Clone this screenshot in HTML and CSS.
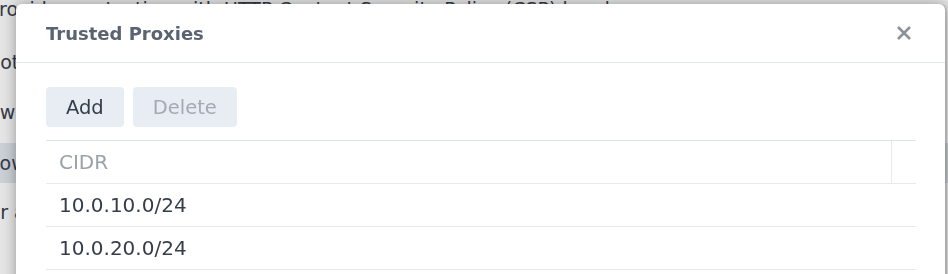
FILE: index.html
```html
<!DOCTYPE html>
<html lang="en">
<head>
  <meta charset="UTF-8" />
  <meta name="viewport" content="width=device-width, initial-scale=1.0" />
  <title>Trusted Proxies</title>
  <link rel="stylesheet" href="styles.css">
</head>
<body>
  <div class="page">
    <p class="line top">Provides protection with HTTP Content Security Policy (CSP) header</p>
    <p class="line cut-not">Not allowed</p>
    <p class="line cut-show">Show source</p>
    <p class="line selected cut-allow">Allow</p>
    <p class="line cut-enter">Enter a</p>
  </div>
  <div class="mask"></div>

  <div class="dialog">
    <div class="dialog-header">
      <span class="dialog-title">Trusted Proxies</span>
      <button class="close" title="Close">
        <svg width="16" height="16" viewBox="0 0 16 16">
          <path d="M2 2 L14 14 M14 2 L2 14" stroke="#8b9199" stroke-width="2.6" fill="none"/>
        </svg>
      </button>
    </div>
    <div class="dialog-body">
      <div class="toolbar">
        <button class="btn">Add</button>
        <button class="btn" disabled>Delete</button>
      </div>
      <div class="grid">
        <div class="grid-row head">
          <div class="cell">CIDR</div>
          <div class="cell tail"></div>
        </div>
        <div class="grid-row">
          <div class="cell">10.0.10.0/24</div>
        </div>
        <div class="grid-row">
          <div class="cell">10.0.20.0/24</div>
        </div>
      </div>
    </div>
  </div>
</body>
</html>
```

FILE: styles.css
```css
* { box-sizing: border-box; }
html, body {
  margin: 0; padding: 0; height: 100%; width: 100%;
  overflow: hidden;
  font-family: "DejaVu Sans", Verdana, sans-serif;
  background: #fff;
}
.page { color: #3a4250; font-size: 19px; }
.line { margin: 0; height: 50px; line-height: 50px; white-space: nowrap; }
.line.top { margin-top: -16px; height: 53px; text-indent: -12px; }
.line.selected { background: #e2e8ef; height: 40px; line-height: 40px; margin: 6px 0 4px; }
.cut-not { text-indent: -14px; }
.cut-show { text-indent: -36px; }
.cut-allow { text-indent: -24px; }
.cut-enter { text-indent: -43px; }
.mask {
  position: fixed; top: 0; left: 0; right: 0; bottom: 0;
  background: rgba(0,0,0,0.1);
}
.dialog {
  position: absolute; left: 16px; top: 4px; width: 929px; height: 300px;
  background: #fff; border-radius: 6px;
  box-shadow: 0 0 14px rgba(0,0,0,0.35), 2px 0 0 rgba(0,0,0,0.1);
}
.dialog-header {
  height: 59px; padding: 0 33px 0 30px;
  display: flex; align-items: center; justify-content: space-between;
  border-bottom: 1px solid #e3e9ef;
}
.dialog-title { font-weight: bold; font-size: 18px; color: #5a6371; }
.close {
  background: none; border: none; padding: 0; width: 16px; height: 16px;
  display: flex; cursor: pointer;
}
.dialog-body { padding: 24px 29px 0 30px; }
.toolbar { display: flex; gap: 9px; margin-bottom: 13px; }
.btn {
  height: 40px; padding: 0 20px; border: none; border-radius: 4px;
  background: #e8edf3; color: #353d4a;
  font-family: inherit; font-size: 19.5px; cursor: pointer;
}
.btn:disabled { color: #a4aab2; cursor: default; }
.grid { border-top: 1px solid #dbe4ec; }
.grid-row {
  display: flex; height: 43px; border-bottom: 1px solid #e6eaf0;
  font-size: 20px; color: #353d4a;
}
.grid-row.head { color: #9aa1a9; }
.cell { flex: 1; padding: 0 13px; display: flex; align-items: center; }
.cell.tail { flex: 0 0 25px; border-left: 1px solid #e6eaf0; padding: 0; }
```
